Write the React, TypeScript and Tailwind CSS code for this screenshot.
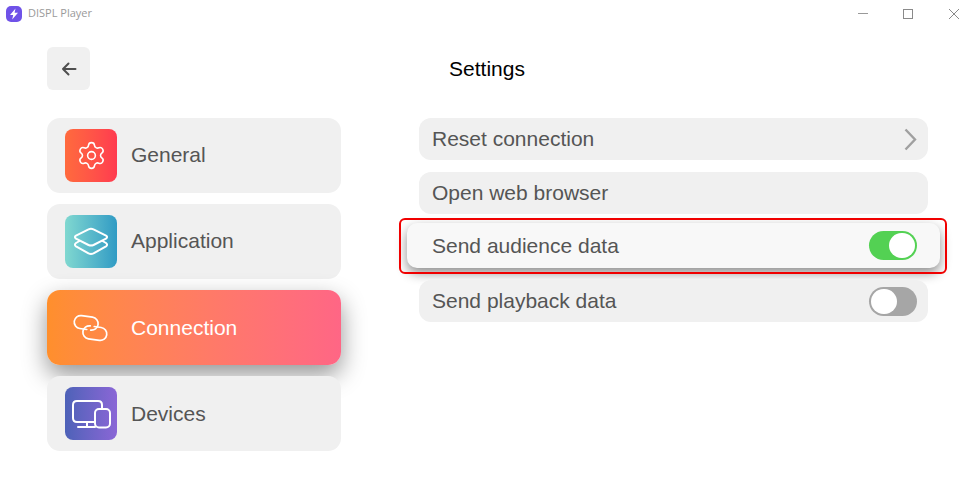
import React from 'react';
import { Settings } from 'lucide-react';

const font = "font-['Liberation_Sans',Arial,sans-serif]";

// icons drawn by hand, the packages have nothing close to these
const LayersIcon = () => (
  <svg width="36" height="30" viewBox="0 0 36 30" fill="none" stroke="white" strokeWidth="2" strokeLinejoin="round" strokeLinecap="round">
    <path d="M15.5 2.4 L3 8.6 Q0.8 10 3 11.6 L15.5 18 Q18 19.2 20.5 18 L33 11.6 Q35.2 10 33 8.6 L20.5 2.4 Q18 1.2 15.5 2.4 Z" />
    <path d="M6.5 14 L3 16 Q0.8 17.8 3 19.4 L15.5 26.4 Q18 27.6 20.5 26.4 L33 19.4 Q35.2 17.8 33 16 L29.5 14" />
  </svg>
);

const LinkIcon = () => (
  <svg width="38" height="30" viewBox="-1 -2 38 30" fill="none" stroke="white" strokeWidth="1.7" strokeLinecap="round">
    <g transform="rotate(8 17.5 13)">
      <path d="M14 15 H7 A6.5 6.5 0 0 1 7 2 H18 A6.5 6.5 0 0 1 18 15" />
      <path d="M21 11 H28 A6.5 6.5 0 0 1 28 24 H17 A6.5 6.5 0 0 1 17 11" />
    </g>
  </svg>
);

const DevicesIcon = () => (
  <svg width="40" height="30" viewBox="0 0 40 30" fill="none" stroke="white" strokeWidth="2" strokeLinecap="round">
    <path d="M23 23 H6 Q2 23 2 19 V6 Q2 2 6 2 H27 Q31 2 31 6 V9" />
    <path d="M16 23 V28 M7 28 H24" />
    <rect x="24" y="10" width="15" height="18.5" rx="4" />
  </svg>
);

const Toggle = ({ on }: { on: boolean }) => (
  <div className={`w-[48px] h-[29px] rounded-full p-[2px] flex ${on ? 'bg-[#53d153] justify-end' : 'bg-[#a6a6a6] justify-start'}`}>
    <div className="w-[26px] h-[25px] rounded-full bg-white" />
  </div>
);

const menu = [
  { label: 'General', text: 'pb-[2px]', box: 'from-[#ff6a3d] to-[#ff3a4f]', icon: <Settings size={31} color="white" strokeWidth={1.2} /> },
  { label: 'Application', text: 'pb-[2px]', box: 'from-[#80d8d0] to-[#2f9bc4]', icon: <LayersIcon /> },
  { label: 'Connection', active: true, text: 'pt-[1px]', box: '', icon: <LinkIcon /> },
  { label: 'Devices', text: 'pt-[1px]', box: 'from-[#4d62b8] to-[#8a66d6]', icon: <DevicesIcon /> },
];

export default function App() {
  return (
    <div className={`w-[972px] h-[479px] bg-white overflow-hidden ${font}`}>
      {/* title bar */}
      <div className="h-[30px] pb-[3px] flex items-center pl-[6px] text-[#9a9a9a]">
        <svg width="16" height="16" viewBox="0 0 16 16">
          <rect width="16" height="16" rx="5" fill="#6f52e8" />
          <path d="M9.5 2.5 L4 9 H7.2 L6.2 13.5 L12 6.8 H8.6 Z" fill="white" />
        </svg>
        <span className="ml-[6px] text-[11px] font-['Open_Sans',sans-serif]">DISPL Player</span>
        <div className="ml-auto flex items-center">
          <div className="w-[10px] h-px bg-[#999] mr-[35px]" />
          <div className="w-[10px] h-[10px] border border-[#8a8a8a] mr-[36px]" />
          <svg className="mr-[13px]" width="10" height="10" viewBox="0 0 10 10" stroke="#8a8a8a" strokeWidth="1">
            <path d="M0 0 L10 10 M10 0 L0 10" />
          </svg>
        </div>
      </div>

      <div className="pl-[47px] pt-[17px]">
        {/* header */}
        <div className="flex items-center w-[880px]">
          <button className="w-[43px] h-[43px] rounded-[6px] bg-[#f0f0f0] flex items-center justify-center">
            <svg width="16" height="14" viewBox="0 0 16 14" fill="none" stroke="#4f4f4f" strokeWidth="2" strokeLinecap="round" strokeLinejoin="round">
              <path d="M14.5 7 H2 M7.5 1.5 L2 7 L7.5 12.5" />
            </svg>
          </button>
          <h1 className="flex-1 text-center text-[21px] text-black pr-[43px]">Settings</h1>
        </div>

        <div className="flex mt-[28px]">
          {/* left menu */}
          <div className="w-[294px] flex flex-col gap-[11px]">
            {menu.map((item) => (
              <div
                key={item.label}
                className={`relative h-[75px] rounded-[13px] flex items-center pl-[18px] ${
                  item.active
                    ? 'bg-gradient-to-r from-[#ff8f2c] to-[#ff6685] shadow-[0_10px_24px_rgba(0,0,0,0.42)]'
                    : 'bg-[#f0f0f0]'
                }`}
              >
                <div className={`w-[52px] h-[53px] rounded-[8px] flex items-center justify-center ${item.box ? `bg-gradient-to-r ${item.box}` : ''}`}>
                  {item.icon}
                </div>
                <span className={`ml-[14px] text-[21px] ${item.text} ${item.active ? 'text-white' : 'text-[#555]'}`}>{item.label}</span>
              </div>
            ))}
          </div>

          {/* right options */}
          <div className="ml-[78px] w-[509px] flex flex-col gap-[12px] text-[21px] text-[#555]">
            <div className="h-[42px] rounded-[12px] bg-[#f0f0f0] flex items-center justify-between pl-[13px] pr-[11px]">
              <span>Reset connection</span>
              <svg width="13" height="23" viewBox="0 0 13 23" fill="none" stroke="#a0a0a0" strokeWidth="2.4">
                <path d="M1.5 1.5 L11 11.5 L1.5 21.5" />
              </svg>
            </div>
            <div className="h-[42px] rounded-[12px] bg-[#f0f0f0] flex items-center pl-[13px]">Open web browser</div>
            <div className="relative h-[42px] -mx-[12px]">
              <div className="h-[45px] -mt-[3px] rounded-[10px] bg-[#f8f8f8] flex items-center justify-between pl-[25px] pr-[23px] shadow-[0_5px_12px_rgba(0,0,0,0.45)]">
                <span className="pt-[1px]">Send audience data</span>
                <Toggle on />
              </div>
              <div className="absolute -left-[8px] -right-[7px] -top-[8px] -bottom-[6px] rounded-[6px] border-2 border-[#f00000]" />
            </div>
            <div className="relative h-[42px] rounded-[12px] bg-[#f0f0f0] flex items-center justify-between pl-[13px] pr-[11px]">
              <span>Send playback data</span>
              <Toggle on={false} />
            </div>
          </div>
        </div>
      </div>
    </div>
  );
}
